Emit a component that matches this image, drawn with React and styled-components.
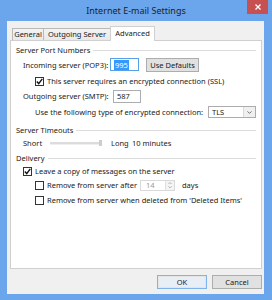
import React from 'react';
import styled, { createGlobalStyle } from 'styled-components';

const Global = createGlobalStyle`
  html, body { margin: 0; padding: 0; }
  body { background: #6ba6ec; font-family: "Noto Sans", "Segoe UI", sans-serif; color: #1a1a1a; }
`;

const Window = styled.div`
  width: 272px;
  height: 300px;
  background: #6ba6ec;
  display: flex;
  flex-direction: column;
`;

const TitleBar = styled.div`
  height: 21px;
  flex: none;
  display: grid;
  grid-template-columns: 1fr auto 1fr;
  align-items: start;
`;

const Title = styled.div`
  grid-column: 2;
  font-size: 9px;
  line-height: 22px;
  color: #222;
`;

const Close = styled.div`
  grid-column: 3;
  justify-self: end;
  margin-right: 4px;
  width: 21px;
  height: 14px;
  background: #c75050;
  display: flex;
  align-items: center;
  justify-content: center;
`;

const Body = styled.div`
  flex: 1;
  margin: 0 8px 6px 7px;
  background: #f0f0f0;
  padding: 5px 2px 5px 3px;
  display: flex;
  flex-direction: column;
  min-height: 0;
`;

const TabRow = styled.div`
  height: 14px;
  flex: none;
  display: flex;
  align-items: flex-end;
  padding-left: 2px;
  position: relative;
  z-index: 1;
`;

const Tab = styled.div`
  width: ${p => p.$w}px;
  height: ${p => (p.$active ? 15 : 12)}px;
  margin-bottom: ${p => (p.$active ? -1 : 0)}px;
  margin-left: ${p => (p.$first ? 0 : -1)}px;
  box-sizing: border-box;
  border: 1px solid ${p => (p.$active ? '#d0d0d0' : '#b9b9b9')};
  border-bottom: none;
  background: ${p => (p.$active ? '#fff' : 'linear-gradient(#f3f3f3, #e9e9e9)')};
  text-align: center;
  font-size: 7.5px;
  line-height: ${p => (p.$active ? 13 : 11)}px;
  white-space: nowrap;
`;

const Panel = styled.div`
  flex: 1;
  background: #fff;
  border: 1px solid #d0d0d0;
  padding: 3px 5px;
  display: flex;
  flex-direction: column;
  font-size: 7.5px;
`;

const Row = styled.div`
  display: flex;
  align-items: center;
  height: ${p => p.$h}px;
  margin-top: ${p => p.$mt || 0}px;
  padding-left: ${p => p.$indent || 0}px;
  white-space: nowrap;
  flex: none;
`;

const HeaderLine = styled.div`
  flex: 1;
  height: 1px;
  margin-left: 3px;
  background: #dcdcdc;
  box-shadow: 0 1px 0 #fff;
`;

const Label = styled.span`
  display: inline-block;
  width: ${p => (p.$w ? `${p.$w}px` : 'auto')};
  flex: none;
`;

const TextBox = styled.div`
  width: ${p => p.$w}px;
  height: ${p => p.$h || 13}px;
  box-sizing: border-box;
  border: 1px solid ${p => (p.$focus ? '#5a9ee6' : '#abadb3')};
  background: #fff;
  display: flex;
  align-items: center;
  padding-left: 3px;
  flex: none;
`;

const Selected = styled.span`
  background: #3399ff;
  color: #fff;
  padding: 0 1px;
  line-height: 10px;
`;

const Button = styled.div`
  width: ${p => p.$w}px;
  height: 14px;
  box-sizing: border-box;
  border: 1px solid ${p => (p.$default ? '#7eb4ea' : '#adadad')};
  background: ${p => (p.$default ? '#e7eef6' : '#e1e1e1')};
  box-shadow: ${p => (p.$default ? 'inset 0 0 0 1px #e5e5e5' : 'none')};
  display: flex;
  align-items: center;
  justify-content: center;
  margin-left: ${p => p.$ml || 0}px;
  font-size: 7.5px;
  flex: none;
`;

const Box = styled.div`
  width: 9px;
  height: 9px;
  box-sizing: border-box;
  border: 1px solid #333;
  background: #fff;
  margin-right: 3px;
  flex: none;
  display: flex;
  align-items: center;
  justify-content: center;
`;

const Select = styled.div`
  width: 48px;
  height: 12px;
  box-sizing: border-box;
  border: 1px solid #acacac;
  background: #fff;
  display: flex;
  align-items: stretch;
  flex: none;
`;

const SelectValue = styled.span`
  flex: 1;
  padding-left: 3px;
  line-height: 10px;
`;

const ArrowBox = styled.div`
  width: 11px;
  background: #f0f0f0;
  border-left: 1px solid #dadada;
  display: flex;
  align-items: center;
  justify-content: center;
`;

const Spinner = styled.div`
  width: 35px;
  height: 11px;
  box-sizing: border-box;
  border: 1px solid #d9d9d9;
  background: #fff;
  display: flex;
  margin-right: 7px;
  flex: none;
`;

const SpinValue = styled.span`
  flex: 1;
  color: #9a9a9a;
  padding-left: 5px;
  line-height: 9px;
`;

const SpinButtons = styled.div`
  width: 8px;
  display: flex;
  flex-direction: column;
  background: #f4f4f4;
  border-left: 1px solid #e0e0e0;
`;

const SpinHalf = styled.div`
  flex: 1;
  display: flex;
  align-items: center;
  justify-content: center;
`;

const Slider = styled.div`
  width: 52px;
  height: 6px;
  margin: 0 9px 0 0;
  position: relative;
  flex: none;
  display: flex;
  align-items: center;
`;

const Track = styled.div`
  flex: 1;
  height: 2px;
  background: #dcdcdc;
  border-bottom: 1px solid #efefef;
`;

const Thumb = styled.div`
  position: absolute;
  right: 0;
  top: 0;
  width: 3px;
  height: 6px;
  background: #cdcdcd;
`;

const Footer = styled.div`
  flex: none;
  display: flex;
  justify-content: flex-end;
  gap: 5px;
  margin-top: 6px;
`;

const Check = ({ checked }) => (
  <Box>
    {checked && (
      <svg width="7" height="7" viewBox="0 0 7 7">
        <path d="M0.8 3.6 L2.7 5.6 L6.3 0.9" fill="none" stroke="#111" strokeWidth="1.4" />
      </svg>
    )}
  </Box>
);

const Chevron = ({ up, size = 5, color = '#555' }) => (
  <svg width={size} height={size * 0.6} viewBox="0 0 5 3">
    <path d={up ? 'M0.5 2.6 L2.5 0.6 L4.5 2.6' : 'M0.5 0.4 L2.5 2.4 L4.5 0.4'} fill="none" stroke={color} strokeWidth="0.9" />
  </svg>
);

export default function App() {
  return (
    <>
      <Global />
      <Window>
        <TitleBar>
          <Title>Internet E-mail Settings</Title>
          <Close>
            <svg width="6" height="6" viewBox="0 0 6 6">
              <path d="M0.5 0.5 L5.5 5.5 M5.5 0.5 L0.5 5.5" stroke="#fff" strokeWidth="1.3" />
            </svg>
          </Close>
        </TitleBar>
        <Body>
          <TabRow>
            <Tab $first $w={32}>General</Tab>
            <Tab $w={68}>Outgoing Server</Tab>
            <Tab $active $w={45}>Advanced</Tab>
          </TabRow>
          <Panel>
            <Row $h={12}>
              <span>Server Port Numbers</span>
              <HeaderLine />
            </Row>
            <Row $h={15} $mt={1} $indent={7}>
              <Label $w={87}>Incoming server (POP3):</Label>
              <TextBox $w={29} $focus>
                <Selected>995</Selected>
              </TextBox>
              <Button $w={53} $ml={7}>Use Defaults</Button>
            </Row>
            <Row $h={12} $mt={3} $indent={19}>
              <Check checked />
              <span>This server requires an encrypted connection (SSL)</span>
            </Row>
            <Row $h={14} $mt={2} $indent={7}>
              <Label $w={90}>Outgoing server (SMTP):</Label>
              <TextBox $w={28}>587</TextBox>
            </Row>
            <Row $h={14} $mt={2} $indent={19}>
              <Label $w={173}>Use the following type of encrypted connection:</Label>
              <Select>
                <SelectValue>TLS</SelectValue>
                <ArrowBox>
                  <Chevron color="#666" />
                </ArrowBox>
              </Select>
            </Row>
            <Row $h={12} $mt={5}>
              <span>Server Timeouts</span>
              <HeaderLine />
            </Row>
            <Row $h={12} $mt={1} $indent={7}>
              <Label $w={27}>Short</Label>
              <Slider>
                <Track />
                <Thumb />
              </Slider>
              <Label $w={21}>Long</Label>
              <span>10 minutes</span>
            </Row>
            <Row $h={12} $mt={3}>
              <span>Delivery</span>
              <HeaderLine />
            </Row>
            <Row $h={12} $mt={1} $indent={7}>
              <Check checked />
              <span>Leave a copy of messages on the server</span>
            </Row>
            <Row $h={12} $mt={2} $indent={19}>
              <Check />
              <Label $w={93}>Remove from server after</Label>
              <Spinner>
                <SpinValue>14</SpinValue>
                <SpinButtons>
                  <SpinHalf>
                    <Chevron up size={4} color="#999" />
                  </SpinHalf>
                  <SpinHalf>
                    <Chevron size={4} color="#999" />
                  </SpinHalf>
                </SpinButtons>
              </Spinner>
              <span>days</span>
            </Row>
            <Row $h={12} $mt={3} $indent={19}>
              <Check />
              <span>Remove from server when deleted from 'Deleted Items'</span>
            </Row>
          </Panel>
          <Footer>
            <Button $w={50} $default>OK</Button>
            <Button $w={50}>Cancel</Button>
          </Footer>
        </Body>
      </Window>
    </>
  );
}
